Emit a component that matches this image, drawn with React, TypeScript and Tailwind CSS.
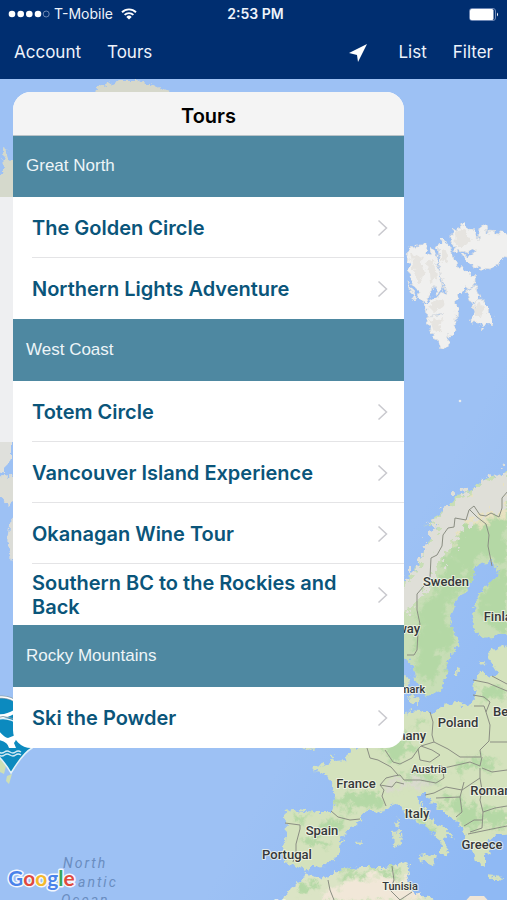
import React from "react";

type Group = { title: string; tours: string[] };

const groups: Group[] = [
  { title: "Great North", tours: ["The Golden Circle", "Northern Lights Adventure"] },
  {
    title: "West Coast",
    tours: [
      "Totem Circle",
      "Vancouver Island Experience",
      "Okanagan Wine Tour",
      "Southern BC to the Rockies and Back",
    ],
  },
  { title: "Rocky Mountains", tours: ["Ski the Powder"] },
];

const EUROPE =
  "M350 750 L346 760 L335 761 L331 754 L330 762 L324 765 L313 766 L315 771 L326 774 L333 786 L335 800 L331 812 L320 812 L305 811 L292 809 L285 812 L284 818 L287 824 L286 840 L283 850 L284 862 L295 865 L303 871 L312 867 L325 866 L331 862 L340 851 L341 840 L350 829 L360 820 L362 813 L372 810 L380 813 L390 807 L396 803 L403 808 L407 816 L418 823 L428 828 L433 832 L440 843 L442 854 L446 856 L448 845 L443 838 L447 835 L455 839 L445 828 L436 822 L430 818 L425 808 L419 803 L417 796 L425 793 L430 800 L440 810 L455 820 L463 828 L465 842 L473 850 L476 862 L484 867 L484 856 L491 852 L487 842 L494 836 L512 834 L512 645 L492 650 L488 656 L491 662 L498 673 L490 678 L483 669 L475 680 L474 697 L475 703 L463 706 L456 702 L440 707 L432 712 L425 712 L412 710 L404 714 L390 712 L385 735 Z";
const SCANDINAVIA =
  "M395 592 L410 576 L415 571 L418 562 L427 548 L430 535 L438 524 L432 523 L423 527 L440 514 L452 503 L458 495 L470 491 L480 482 L490 478 L500 475 L512 468 L512 633 L495 636 L480 637 L474 628 L473 610 L478 596 L486 585 L497 577 L499 570 L490 562 L480 563 L474 570 L472 580 L465 592 L456 600 L451 615 L450 628 L459 638 L458 648 L452 653 L447 661 L446 678 L440 691 L430 695 L425 697 L422 690 L416 680 L413 668 L409 660 L395 655 Z";
const NORWAY_COAST =
  "M395 592 L410 576 L415 571 L418 562 L427 548 L430 535 L438 524 L432 523 L423 527 L440 514 L452 503 L458 495 L470 491 L480 482 L490 478 L512 470 L512 500 L493 514 L478 517 L468 520 L462 532 L452 544 L444 560 L434 572 L429 588 L420 598 L410 610 L395 615 Z";
const AFRICA =
  "M280 905 L290 889 L302 880 L306 872 L315 876 L325 879 L340 870 L360 867 L385 867 L395 865 L402 862 L410 866 L409 874 L406 880 L412 888 L415 894 L430 897 L440 905 Z";
const SVALBARD = [
  "M408 247 L413 248 L417 245 L428 245 L426 252 L429 254 L432 248 L437 255 L438 265 L443 290 L437 294 L433 286 L428 299 L423 302 L417 298 L418 291 L413 284 L409 274 L410 264 L407 257 Z",
  "M438 245 L443 239 L447 245 L453 250 L453 259 L458 261 L459 267 L467 271 L475 278 L475 286 L465 288 L457 296 L456 320 L453 334 L449 336 L448 348 L442 348 L438 339 L433 337 L427 322 L429 316 L441 315 L444 313 L427 316 L425 303 L437 297 L445 292 L440 268 Z",
  "M452 228 L458 231 L463 223 L466 228 L473 230 L478 240 L481 225 L486 225 L487 232 L500 233 L512 235 L512 253 L500 262 L492 269 L480 268 L467 263 L462 256 L475 254 L475 248 L462 253 L454 250 L452 240 Z",
  "M467 289 L477 287 L480 299 L470 302 Z",
  "M472 301 L485 300 L487 309 L493 316 L491 323 L484 328 L480 323 L470 323 L475 312 Z",
  "M407 282 L409 283 L416 300 L414 300 Z",
];
const GLACIERS = [
  "M410 252 L420 258 L426 272 L418 284 L413 268 Z",
  "M428 262 L434 258 L436 280 L430 284 Z",
  "M428 306 L440 300 L446 304 L434 312 Z",
  "M430 320 L442 318 L440 330 L434 332 Z",
  "M455 232 L464 230 L472 240 L466 246 L456 246 Z",
  "M442 250 L448 252 L446 262 L442 260 Z",
  "M474 305 L482 304 L484 314 L476 316 Z",
];
const ISLANDS = [
  "M397 818 L400 824 L398 829 L395 824 Z",
  "M393 832 L400 831 L401 845 L394 848 Z",
  "M419 856 L436 854 L434 866 L420 860 Z",
  "M355 842 L362 841 L361 845 L356 844 Z",
  "M488 875 L503 877 L502 880 L489 878 Z",
  "M455 667 L459 668 L457 676 L455 676 Z",
  "M479 661 L486 661 L483 665 Z",
  "M404 676 L409 677 L408 690 L403 690 Z",
  "M409 697 L418 696 L419 704 L411 704 Z",
  "M300 746 L316 748 L308 751 Z",
];
const FOREST = [
  "M470 520 L512 500 L512 560 L502 563 L490 556 L478 560 L468 575 L466 588 L450 604 L446 625 L452 640 L440 660 L440 680 L428 690 L420 675 L414 660 L418 640 L420 610 L434 590 L440 570 Z",
  "M500 575 L512 570 L512 630 L485 630 L478 612 L484 595 Z",
  "M340 792 L360 796 L372 790 L382 800 L370 808 L352 808 L340 812 L334 806 Z",
  "M290 812 L312 814 L308 820 L292 822 Z",
  "M300 838 L325 836 L332 842 L320 848 L304 846 Z",
  "M345 825 L330 830 L322 822 L340 820 Z",
  "M385 738 L402 728 L412 742 L400 765 L388 762 Z",
  "M478 685 L492 684 L507 690 L507 700 L484 698 Z",
  "M416 718 L428 716 L430 728 L418 724 Z",
  "M400 770 L440 776 L436 784 L405 778 Z",
  "M440 800 L460 798 L480 812 L482 830 L466 826 L450 812 Z",
  "M486 806 L507 812 L507 828 L486 828 Z",
  "M410 812 L426 822 L438 834 L430 832 L412 820 Z",
  "M340 872 L385 868 L404 868 L398 878 L360 874 L340 880 Z",
  "M296 888 L315 880 L318 892 L300 895 Z",
  "M450 762 L480 758 L498 768 L470 772 Z",
];
const DESERT = [
  "M320 905 L335 885 L370 878 L404 882 L425 900 L440 905 Z",
  "M462 905 L470 896 L484 896 L492 905 Z",
];
const BORDERS = [
  "M417 650 L418 632 L420 624 L417 610 L417 594 L424 586 L430 577 L431 558 L437 555 L442 546 L443 535 L448 528 L454 527 L455 518 L466 520 L469 510 L474 506 L480 515 L486 516 L491 513 L499 517 L502 508 L502 498 L508 491",
  "M469 509 L477 517 L486 524 L489 535 L488 546 L492 566",
  "M417 650 L414 655 L407 655",
  "M385 750 L393 762 L400 764 L412 758 L419 748 L421 746 L432 750 L440 755 L430 762 L420 760 L418 749",
  "M430 712 L433 722 L432 735 L434 742 L421 746",
  "M434 742 L448 749 L460 757 L472 757 L481 757 L480 750 L489 741 L490 725 L486 712 L484 706 L474 706",
  "M440 765 L444 768 L470 762 L480 766 L482 757 M482 768 L492 772 L507 770",
  "M398 775 L391 767 L378 760 L370 758 L367 748",
  "M380 785 L386 778 L394 776 L400 775 L404 780 L420 780 L436 783 L444 778 L442 766",
  "M380 785 L384 790 L382 796 L386 806",
  "M380 785 L392 787 L396 782 L404 784",
  "M331 811 L338 817 L350 820 L360 819",
  "M285 823 L300 825 L300 829 L296 844 L296 852 L293 862",
  "M425 795 L434 793 L446 787 L462 790 L480 778 L480 768",
  "M436 798 L460 797 L462 812 L456 817 M460 797 L464 782",
  "M480 778 L482 790 L480 800 L483 812 L482 828 L470 832 M483 812 L495 808 L507 806",
  "M464 826 L474 820 L482 820 M468 834 L492 829 L507 826",
  "M328 880 L330 890 L334 900 M392 866 L394 880 L390 890 L400 900 M400 900 L412 892",
  "M473 695 L484 697 L490 702 L486 712 M473 680 L488 683 L507 691 M490 742 L507 742 M492 676 L507 684",
];
const LABELS: [number, number, string, number][] = [
  [446, 586, "Sweden", 13],
  [505, 621, "Finland", 13],
  [398, 633, "Norway", 13],
  [403, 693, "Denmark", 11],
  [458, 727, "Poland", 13],
  [515, 716, "Belarus", 13],
  [400, 740, "Germany", 13],
  [429, 773, "Austria", 11],
  [356, 788, "France", 13],
  [496, 795, "Romania", 13],
  [417, 818, "Italy", 13],
  [322, 835, "Spain", 13],
  [287, 859, "Portugal", 13],
  [482, 849, "Greece", 13],
  [400, 890, "Tunisia", 11],
  [300, 909, "Morocco", 13],
];

function Paths({ items, ...rest }: { items: string[] } & React.SVGProps<SVGGElement>) {
  return (
    <g {...rest}>
      {items.map((d) => (
        <path key={d} d={d} />
      ))}
    </g>
  );
}

function WorldMap() {
  return (
    <svg
      className="absolute inset-0 h-full w-full"
      viewBox="0 0 507 900"
      preserveAspectRatio="xMidYMin slice"
      role="img"
      aria-label="Map"
    >
      <defs>
        <filter id="coast" x="0" y="0" width="507" height="900" filterUnits="userSpaceOnUse" colorInterpolationFilters="sRGB">
          <feTurbulence type="fractalNoise" baseFrequency="0.18" numOctaves="3" seed="4" result="n" />
          <feDisplacementMap in="SourceGraphic" in2="n" scale="9" xChannelSelector="R" yChannelSelector="G" />
          <feGaussianBlur stdDeviation="0.4" />
        </filter>
        <filter id="fjord" x="0" y="0" width="507" height="900" filterUnits="userSpaceOnUse" colorInterpolationFilters="sRGB">
          <feTurbulence type="fractalNoise" baseFrequency="0.16" numOctaves="3" seed="9" result="n" />
          <feDisplacementMap in="SourceGraphic" in2="n" scale="26" xChannelSelector="R" yChannelSelector="G" />
          <feGaussianBlur stdDeviation="0.4" />
        </filter>
        <filter id="blotch" x="0" y="0" width="507" height="900" filterUnits="userSpaceOnUse" colorInterpolationFilters="sRGB">
          <feTurbulence type="fractalNoise" baseFrequency="0.09" numOctaves="4" seed="2" result="n" />
          <feDisplacementMap in="SourceGraphic" in2="n" scale="30" xChannelSelector="R" yChannelSelector="G" />
          <feGaussianBlur stdDeviation="0.9" />
        </filter>
        <linearGradient id="sea" x1="0" y1="0" x2="1" y2="1">
          <stop offset="0.7" stopColor="#9dc1f4" />
          <stop offset="0.95" stopColor="#8fb9f4" />
        </linearGradient>
        <clipPath id="land">
          <path d={EUROPE} />
          <path d={SCANDINAVIA} />
          <path d={AFRICA} />
        </clipPath>
      </defs>
      <rect width="507" height="900" fill="url(#sea)" />

      {/* Greenland and the Canadian Arctic */}
      <g filter="url(#coast)">
        <path d="M97 95 L98 87 L108 84 L122 80 L138 80 L152 85 L168 92 L168 96 Z" fill="#d6d8cb" />
        <path d="M3 148 L7 150 L10 160 L14 166 L20 200 L-5 200 L-5 178 L4 172 Z" fill="#d5d9cc" />
        <path d="M-5 430 L12 440 L12 458 L6 466 L3 474 L-5 470 Z" fill="#dfe0dc" />
        <path d="M-5 478 L12 476 L18 500 L8 506 L-5 494 Z" fill="#dcddd6" />
        <path d="M18 515 L10 524 L8 545 L11 562 L18 568 Z" fill="#dcddd8" />
      </g>
      <rect y="197" width="14" height="245" fill="#eeeff1" />
      <path d="M0 758 L6 766 L4 774 L0 772 Z M7 776 L12 774 L9 784 L6 781 Z" fill="#cfdfb4" />

      <g filter="url(#coast)">
        <Paths items={SVALBARD} fill="#f0f0ef" stroke="#e2e1dd" strokeWidth="0.800" />
        <Paths items={GLACIERS} fill="#e6e4e0" />
      </g>
      <circle cx="460" cy="401" r="1.300" fill="#e8ecee" />

      <g filter="url(#coast)">
        <path d={EUROPE} fill="#d4e2bd" />
        <path d={SCANDINAVIA} fill="#c8deb6" />
        <path d={AFRICA} fill="#dbe4c5" />
        <Paths items={ISLANDS} fill="#d3e0bf" />
        <g clipPath="url(#land)">
          <Paths items={FOREST} fill="#b4d8a5" filter="url(#blotch)" />
          <Paths items={DESERT} fill="#f1e7d8" filter="url(#blotch)" />
          <path
            d="M470 498 L512 484 L512 512 L490 522 L466 528 L452 540 L446 552 L456 522 Z"
            fill="#e9e2c2"
            filter="url(#blotch)"
          />
          <path d="M385 785 L400 778 L435 780 L425 787 L400 786 L388 794 Z" fill="#d9d9ce" filter="url(#blotch)" />
        </g>
      </g>
      <path d="M462 905 L470 896 L484 896 L492 905 Z" fill="#efe5d6" />
      <path d={NORWAY_COAST} fill="#dfdfd8" filter="url(#fjord)" />

      <Paths
        items={BORDERS}
        fill="none"
        stroke="#8b8e83"
        strokeWidth="1"
        strokeLinejoin="round"
      />

      <g
        className="font-['Roboto',sans-serif] font-medium"
        fill="#36383a"
        stroke="#f3f6ea"
        strokeOpacity="0.8"
        strokeWidth="2"
        strokeLinejoin="round"
        paintOrder="stroke"
        textAnchor="middle"
      >
        {LABELS.map(([x, y, name, size]) => (
          <text key={name} x={x} y={y} fontSize={size}>
            {name}
          </text>
        ))}
      </g>
      <g className="font-['Roboto',sans-serif] tracking-[2px] italic" fill="#6a8dc0" fontSize="14">
        <text x="63" y="868">North</text>
        <text x="78" y="887">antic</text>
        <text x="61" y="905">Ocean</text>
      </g>
      <text
        className="font-['Lato',sans-serif] font-bold"
        x="8"
        y="886"
        fontSize="21"
        stroke="#f4f8fe"
        strokeWidth="3"
        strokeLinejoin="round"
        paintOrder="stroke"
      >
        <tspan fill="#4a83ea">G</tspan>
        <tspan fill="#e04a3f">o</tspan>
        <tspan fill="#f4b92c">o</tspan>
        <tspan fill="#4a83ea">g</tspan>
        <tspan fill="#3aa757">l</tspan>
        <tspan fill="#e04a3f">e</tspan>
      </text>

      {/* Tour pins */}
      <circle cx="2" cy="720" r="23" fill="#0c8abf" stroke="#8fa3ad" strokeWidth="3" />
      <circle cx="2" cy="720" r="23" fill="none" stroke="#fff" strokeWidth="1.500" />
      <path d="M-2 714 Q6 715 14 710 L14 714 Q6 719 -2 718 Z" fill="#fff" />
      <path
        d="M-12 725 Q2 712 20 725 L32 748 Q23 753 11 773 Q2 757 -12 748 Z"
        fill="#0c8abf"
        stroke="#e5f2f8"
        strokeWidth="1.500"
      />
      <path d="M-12 723 Q2 710 20 723" fill="none" stroke="#8fa3ad" strokeWidth="1" />
      <path d="M-1 731 Q4 737 8 738 Q13 737 17 733 Q17 740 14 743 L16 748 L9 748 Q8 742 -1 740 Z" fill="#fff" />
      <path
        d="M-1 752 q3 2 5.500 0 t5.500 0 t5.500 0 t5.500 0 M-1 755 q3 2 5.500 0 t5.500 0 t5.500 0 t5.500 0"
        fill="none"
        stroke="#d4ebf5"
        strokeWidth="1.500"
      />
    </svg>
  );
}

function StatusBar() {
  return (
    <div className="grid h-7 grid-cols-3 items-center px-2">
      <div className="flex items-center gap-1 text-sm">
        <svg width="42" height="8" viewBox="0 0 42 8" aria-hidden="true">
          <g fill="#fff">
            <circle cx="4" cy="4" r="3.300" />
            <circle cx="12.700" cy="4" r="3.300" />
            <circle cx="21.300" cy="4" r="3.300" />
            <circle cx="30" cy="4" r="3.300" />
          </g>
          <circle cx="38.200" cy="4" r="3" fill="none" stroke="#8ba0c4" strokeWidth="0.800" />
        </svg>
        <span className="whitespace-nowrap">T-Mobile</span>
        <svg className="ml-1 shrink-0" width="16" height="12" viewBox="0 0 16 12" aria-hidden="true">
          <g fill="none" stroke="#fff" strokeWidth="1.900">
            <path d="M1 4.200 A10 10 0 0 1 15 4.200" />
            <path d="M3.600 6.900 A6.300 6.300 0 0 1 12.400 6.900" />
          </g>
          <path d="M8 11.600 L5.300 8.900 A3.900 3.900 0 0 1 10.700 8.900 Z" fill="#fff" />
        </svg>
      </div>
      <span className="pl-1 text-center text-sm font-semibold">2:53 PM</span>
      <svg className="justify-self-end" width="30" height="13" viewBox="0 0 30 13" aria-label="Battery full">
        <rect x="0.500" y="0.500" width="26" height="12" rx="2.500" fill="none" stroke="#6f88b5" />
        <rect x="1" y="1" width="23.500" height="11" rx="1.500" fill="#fff" />
        <path d="M28 4.500 Q30 6.500 28 8.500 Z" fill="#fff" />
      </svg>
    </div>
  );
}

export default function App() {
  return (
    <div className="relative flex min-h-screen flex-col overflow-hidden bg-[#9dc1f4] font-['Inter',sans-serif]">
      <WorldMap />
      <header className="relative h-[79px] bg-[#002e70] text-[#eef3fb]">
        <StatusBar />
        <nav className="flex h-[50px] items-center justify-between px-3.5 text-[17px]">
          <div className="flex gap-[26px]">
            <button type="button">Account</button>
            <button type="button">Tours</button>
          </div>
          <div className="flex items-center gap-[26px]">
            <button type="button" aria-label="My location">
              <svg className="mr-1" width="20" height="20" viewBox="0 0 20 20" aria-hidden="true">
                <path d="M18 1 L9 19 L8 12 L0 10 Z" fill="#fff" />
              </svg>
            </button>
            <button type="button">List</button>
            <button type="button">Filter</button>
          </div>
        </nav>
      </header>

      <main className="relative flex-1">
        <section className="mt-[13px] mr-[103px] ml-[13px] overflow-hidden rounded-[18px] bg-white">
          <h1 className="flex h-11 items-center justify-center border-b border-[#b9c3c8] bg-[#f4f4f4] pt-1 text-xl font-semibold text-black">
            Tours
          </h1>
          {groups.map((group) => (
            <section key={group.title} className="border-b border-[#4e88a1] last:border-b-0">
              <h2 className="flex h-[61px] items-center bg-[#4e88a1] px-[13px] pb-px font-['Liberation_Sans',sans-serif] text-[17px] text-[#edf5f8]">
                {group.title}
              </h2>
              <ul className="divide-y divide-[#e4e4e6] pl-[19px]">
                {group.tours.map((tour) => (
                  <li key={tour} className="h-[61px]">
                    <button
                      type="button"
                      className="flex h-full w-full items-center justify-between pt-px pr-4 text-left text-xl leading-6 font-semibold text-[#0a557a]"
                    >
                      <span className="max-w-[320px]">{tour}</span>
                      <svg className="shrink-0" width="11" height="18" viewBox="0 0 11 18" aria-hidden="true">
                        <path d="M1.500 1.500 L9.500 9 L1.500 16.500" fill="none" stroke="#c9c9ce" strokeWidth="1.500" />
                      </svg>
                    </button>
                  </li>
                ))}
              </ul>
            </section>
          ))}
        </section>
      </main>
    </div>
  );
}
